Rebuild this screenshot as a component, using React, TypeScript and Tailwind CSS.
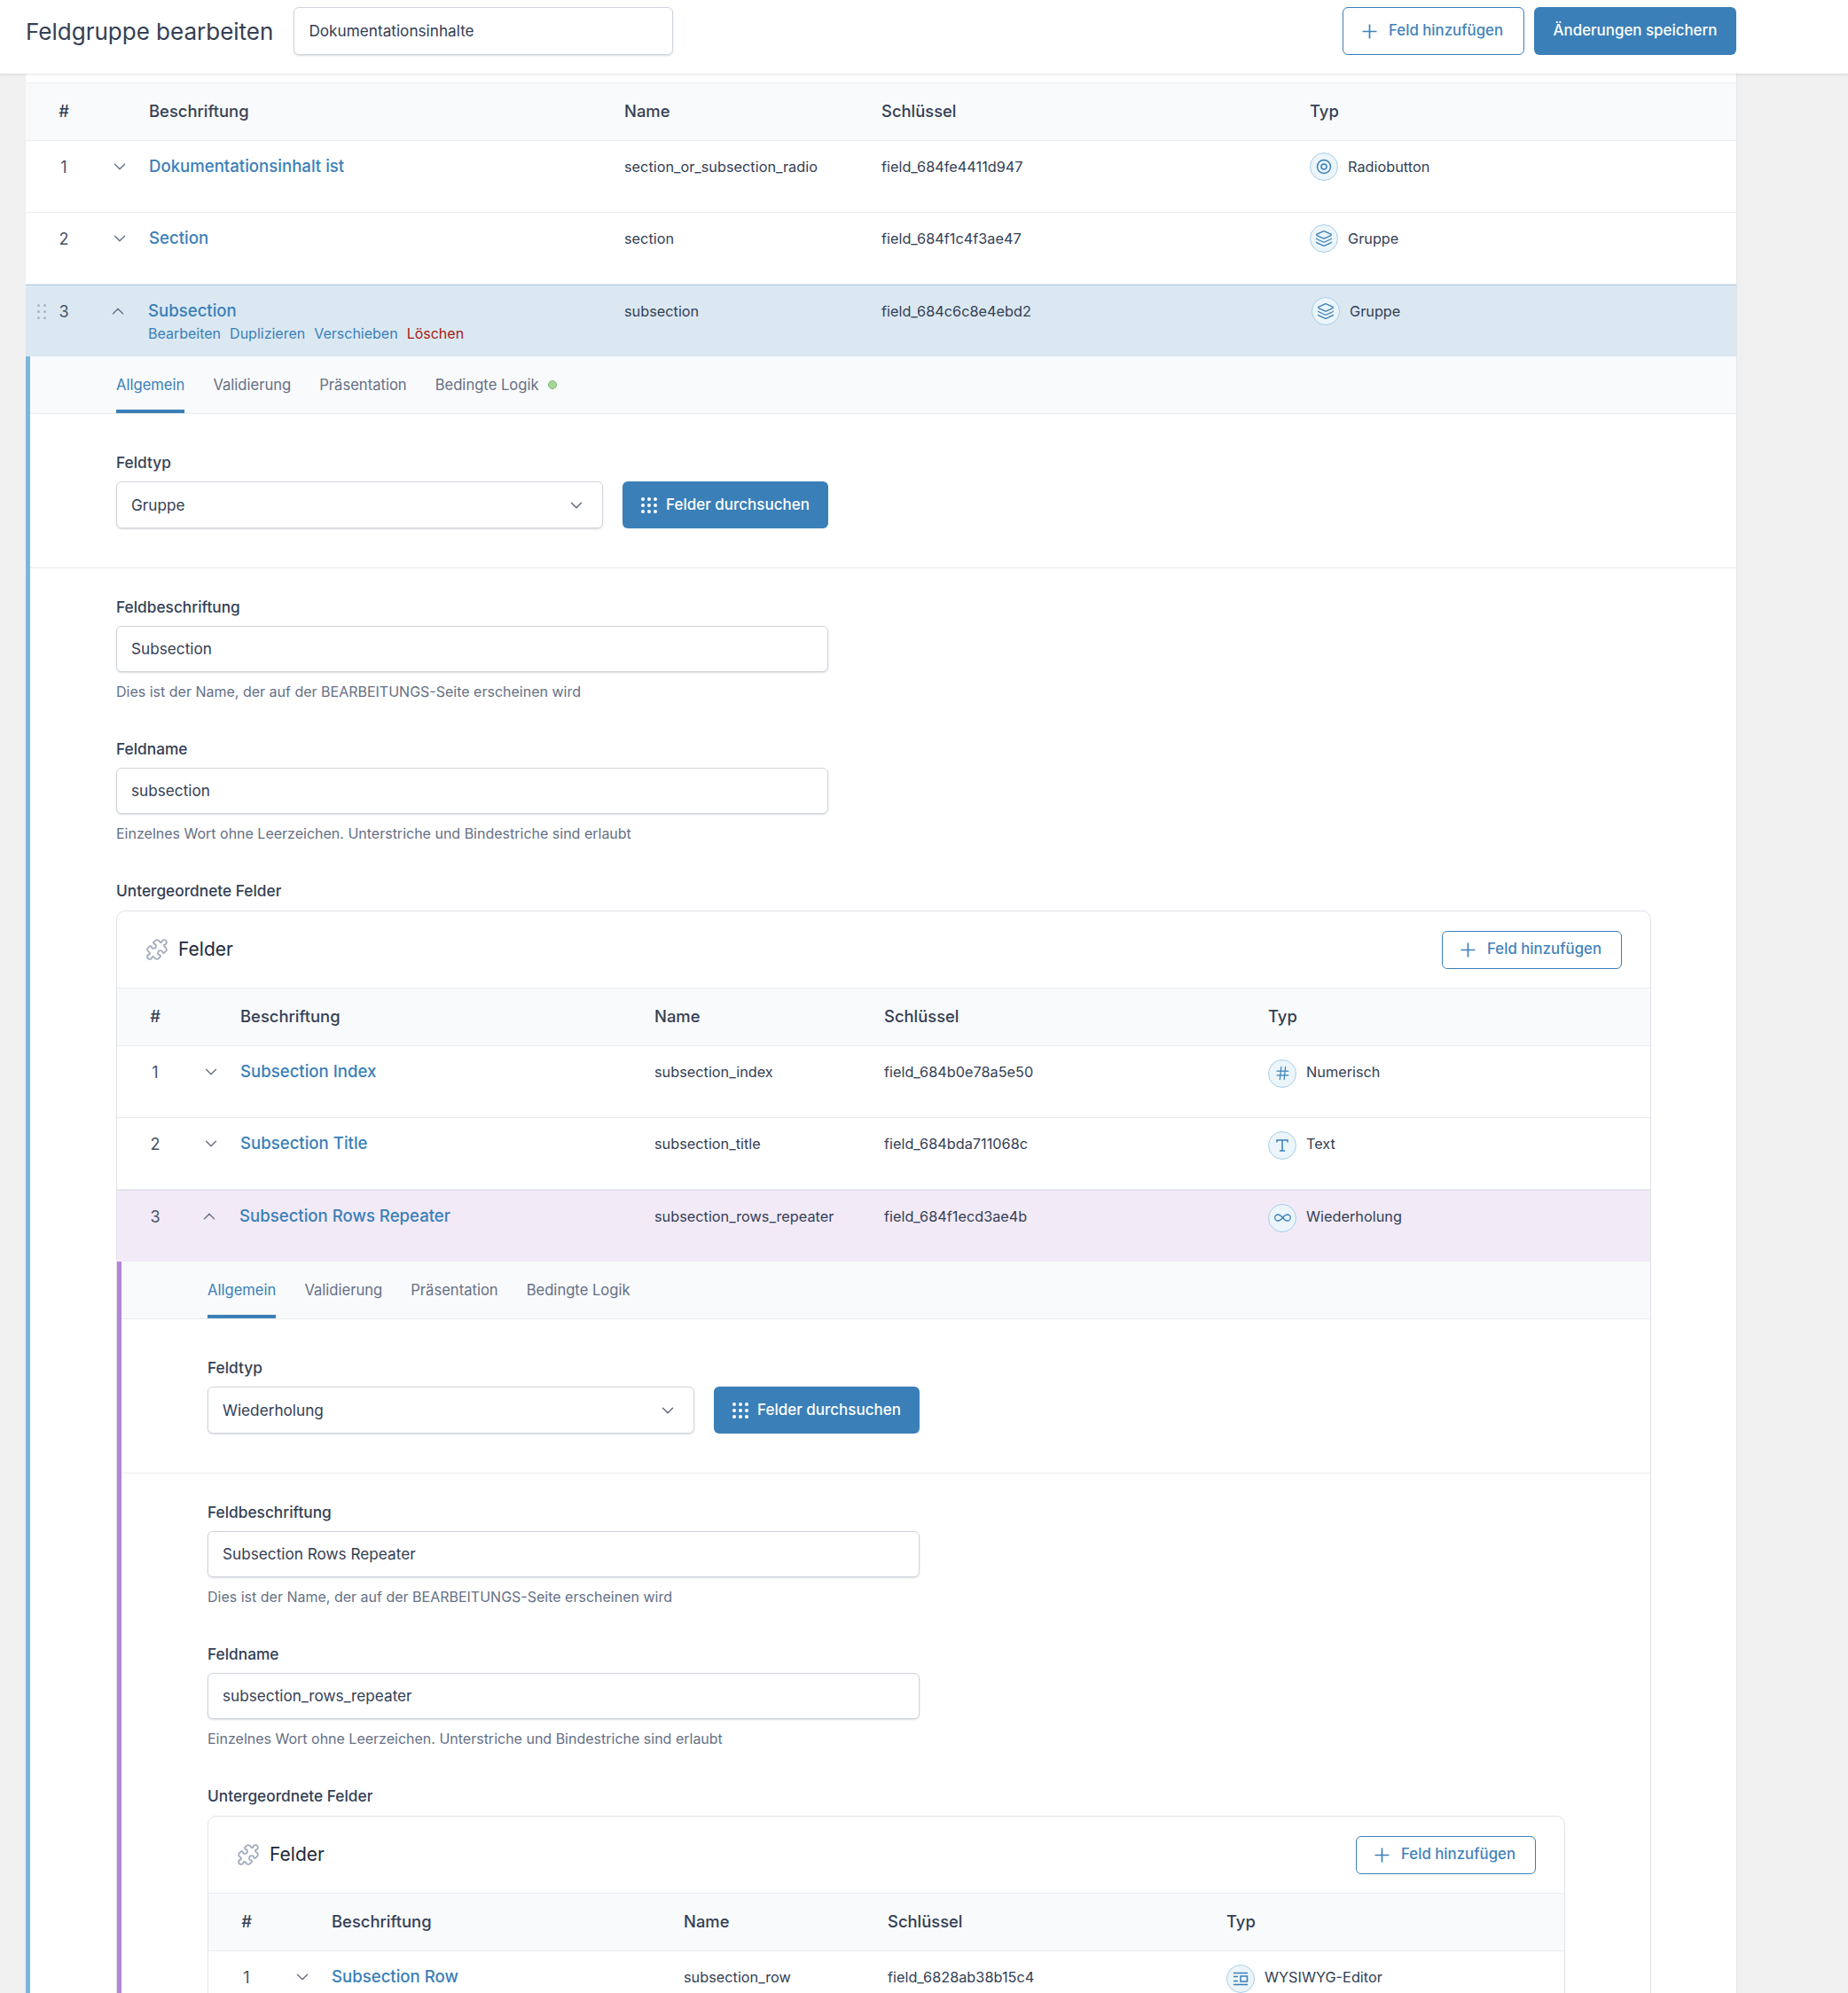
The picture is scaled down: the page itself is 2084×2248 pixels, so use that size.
import React from 'react';
import { ChevronDown, ChevronUp, Hash, Infinity as InfinityIcon, Layers, Puzzle } from 'lucide-react';

type FieldKind = 'radio' | 'group' | 'number' | 'text' | 'repeater' | 'wysiwyg';

interface FieldRowData {
  index: number;
  label: string;
  name: string;
  fieldKey: string;
  kind: FieldKind;
  typeLabel: string;
  open?: boolean;
}

// column widths per nesting depth
const gridByDepth = [
  'grid-cols-[86px_53px_536px_290px_483px_1fr]',
  'grid-cols-[86px_53px_467px_259px_433px_1fr]',
  'grid-cols-[86px_53px_397px_230px_382px_1fr]',
];

const KindGlyph = ({ kind }: { kind: FieldKind }) => {
  switch (kind) {
    case 'radio':
      return (
        <svg width="20" height="20" viewBox="0 0 20 20" fill="none" stroke="currentColor" strokeWidth="1.5">
          <circle cx="10" cy="10" r="7.5" />
          <circle cx="10" cy="10" r="3" />
        </svg>
      );
    case 'group':
      return <Layers size={20} strokeWidth={1.5} />;
    case 'number':
      return <Hash size={19} strokeWidth={1.5} />;
    case 'text':
      return (
        <svg width="18" height="18" viewBox="0 0 18 18" fill="none" stroke="currentColor" strokeWidth="1.5" strokeLinecap="round">
          <path d="M3 5V3h12v2M9 3v12M6.5 15h5" />
        </svg>
      );
    case 'repeater':
      return <InfinityIcon size={21} strokeWidth={1.5} />;
    case 'wysiwyg':
      return (
        <svg width="20" height="20" viewBox="0 0 20 20" fill="none" stroke="currentColor" strokeWidth="1.5">
          <path d="M2 3.5h16M2 16.5h16M2 7.5h5M2 12.5h5" />
          <rect x="10" y="7" width="7.5" height="6" />
        </svg>
      );
  }
};

const FieldTypeIcon = ({ kind, nested }: { kind: FieldKind; nested: boolean }) => (
  <span className={`flex h-8 w-8 shrink-0 items-center justify-center rounded-full border border-[#a9cfe8] bg-[#ebf5fa] text-[#3a7fb8] ${nested ? 'mt-[3px]' : ''}`}>
    <KindGlyph kind={kind} />
  </span>
);

const DotGrid = ({ cols, rows, size, gap, className }: { cols: number; rows: number; size: number; gap: number; className: string }) => {
  const dots = [];
  for (let y = 0; y < rows; y++) {
    for (let x = 0; x < cols; x++) {
      dots.push(<circle key={`${x}-${y}`} cx={size / 2 + x * gap} cy={size / 2 + y * gap} r={size / 2} />);
    }
  }
  return (
    <svg width={size + (cols - 1) * gap} height={size + (rows - 1) * gap} className={className} fill="currentColor">
      {dots}
    </svg>
  );
};

const AddFieldButton = ({ tall }: { tall?: boolean }) => (
  <button
    className={`flex items-center gap-[13px] rounded-[6px] border border-[#3a7fb8] bg-white text-[16.8px] font-medium text-[#3f82ba] ${
      tall ? 'h-[54px] pl-[21px] pr-[23px]' : 'h-[43px] pl-[20px] pr-[22px]'
    }`}
  >
    <svg width="17" height="17" viewBox="0 0 17 17" fill="none" stroke="currentColor" strokeWidth="1.7">
      <path d="M8.500 0.500v16M0.500 8.500h16" />
    </svg>
    Feld hinzufügen
  </button>
);

const HeaderRow = ({ depth }: { depth: number }) => (
  <div className={`grid h-[65px] items-center border-b border-[#eaecf0] bg-[#f9fafb] text-[18.4px] font-medium text-[#344054] ${gridByDepth[depth]}`}>
    <span className="text-center">#</span>
    <span />
    <span>Beschriftung</span>
    <span>Name</span>
    <span>Schlüssel</span>
    <span>Typ</span>
  </div>
);

const FieldRow = ({ field, depth, active }: { field: FieldRowData; depth: number; active?: 'blue' | 'purple' }) => {
  const rowClass =
    active === 'blue'
      ? 'bg-[#dbe8f2] border-t border-t-[#b3d0e5]'
      : active === 'purple'
        ? 'bg-[#f3eaf7] border-t border-t-[#dfdde3]'
        : 'bg-white border-b border-b-[#eaecf0]';

  return (
    <div className={`relative grid h-[81px] items-start pt-[13px] text-[16.3px] text-[#344054] ${rowClass} ${gridByDepth[depth]}`}>
      {active === 'blue' && <DotGrid cols={2} rows={3} size={3} gap={7} className="absolute left-[13px] top-[21px] text-[#a9b6c4]" />}
      <span className="flex h-8 items-center justify-center text-[18px] text-[#475467]">{field.index}</span>
      <span className="flex h-8 items-center pl-[9px] text-[#667085]">
        {field.open ? <ChevronUp size={22} strokeWidth={1.5} className="-ml-[2px]" /> : <ChevronDown size={22} strokeWidth={1.5} />}
      </span>
      <div className={field.open ? '-ml-px' : ''}>
        <div className="flex h-8 items-center text-[18.6px] font-medium text-[#3a7fb8]">{field.label}</div>
        {active === 'blue' && (
          <div className="-mt-px flex gap-[10px] text-[16px] leading-[20px] text-[#3a7fb8]">
            <span>Bearbeiten</span>
            <span>Duplizieren</span>
            <span>Verschieben</span>
            <span className="text-[#a61b0f]">Löschen</span>
          </div>
        )}
      </div>
      <span className="flex h-8 items-center">{field.name}</span>
      <span className="flex h-8 items-center">{field.fieldKey}</span>
      <span className={`flex h-8 items-center gap-[11px] ${active === 'blue' ? 'ml-[2px]' : ''}`}>
        <FieldTypeIcon kind={field.kind} nested={depth > 0} />
        {field.typeLabel}
      </span>
    </div>
  );
};

const TextField = ({ label, value, hint, className }: { label: string; value: string; hint: string; className?: string }) => (
  <div className={className}>
    <div className="mb-[10px] text-[17.3px] font-medium leading-[22px] text-[#344054]">{label}</div>
    <div className="flex h-[52px] w-[803px] items-center rounded-[6px] border border-[#d0d5dd] bg-white px-[16px] text-[17.2px] text-[#344054] shadow-[0_1px_2px_rgba(16,24,40,0.15)]">
      {value}
    </div>
    <div className="mt-[11px] text-[16px] leading-[22px] text-[#667085]">{hint}</div>
  </div>
);

const SettingsPanel = ({
  accent,
  typeName,
  label,
  name,
  showDot,
  children,
}: {
  accent: string;
  typeName: string;
  label: string;
  name: string;
  showDot?: boolean;
  children: React.ReactNode;
}) => (
  <div className={`border-l-[5px] bg-white ${accent}`}>
    <div className="flex h-[65px] gap-[32px] border-b border-[#eaecf0] bg-[#f9fafb] pl-[97px] text-[16.6px] text-[#667085]">
      <span className="flex items-center border-b-[4px] border-[#3a7fb8] pt-[4px] text-[#3a7fb8]">Allgemein</span>
      <span className="flex items-center">Validierung</span>
      <span className="flex items-center">Präsentation</span>
      <span className="flex items-center gap-[10px]">
        Bedingte Logik
        {showDot && <span className="h-[10px] w-[10px] rounded-full border border-[#7dba73] bg-[#a5d79c]" />}
      </span>
    </div>

    <div className="border-b border-[#eaecf0] pb-[44px] pl-[97px] pt-[44px]">
      <div className="mb-[10px] text-[17.3px] font-medium leading-[22px] text-[#344054]">Feldtyp</div>
      <div className="flex gap-[22px]">
        <div className="flex h-[53px] w-[549px] items-center justify-between rounded-[6px] border border-[#d0d5dd] bg-white pl-[16px] pr-[18px] text-[17.2px] text-[#344054] shadow-[0_1px_2px_rgba(16,24,40,0.15)]">
          {typeName}
          <ChevronDown size={22} strokeWidth={1.75} className="text-[#667085]" />
        </div>
        <button className="flex h-[53px] w-[232px] items-center justify-center gap-[10px] rounded-[6px] bg-[#3a7fb8] text-[17px] font-medium text-white">
          <DotGrid cols={3} rows={3} size={4} gap={7} className="text-white" />
          Felder durchsuchen
        </button>
      </div>
    </div>

    <div className="pl-[97px] pr-[96px] pt-[33px]">
      <TextField label="Feldbeschriftung" value={label} hint="Dies ist der Name, der auf der BEARBEITUNGS-Seite erscheinen wird" />
      <TextField className="mt-[43px]" label="Feldname" value={name} hint="Einzelnes Wort ohne Leerzeichen. Unterstriche und Bindestriche sind erlaubt" />
      <div className="mb-[11px] mt-[43px] text-[17.3px] font-medium leading-[22px] text-[#344054]">Untergeordnete Felder</div>
      {children}
    </div>
  </div>
);

const FieldsCard = ({ children }: { children: React.ReactNode }) => (
  <div className="overflow-hidden rounded-[10px] border border-[#dfe2e8] bg-white">
    <div className="flex h-[87px] items-center justify-between border-b border-[#eaecf0] pl-[32px] pr-[32px]">
      <div className="flex items-center gap-[11px] text-[21px] text-[#1d2939]">
        <Puzzle size={26} strokeWidth={1.75} className="text-[#a5afc0]" />
        Felder
      </div>
      <AddFieldButton />
    </div>
    {children}
  </div>
);

const App = () => {
  return (
    <div className="h-[2248px] overflow-hidden bg-[#f0f0f1] font-[Inter,sans-serif]">
      <header className="relative z-10 flex h-[83px] items-start justify-between bg-white pl-[29px] pr-[126px] pt-[8px] shadow-[0_1px_3px_rgba(16,24,40,0.12)]">
        <div className="flex items-center gap-[23px]">
          <h1 className="text-[26px] text-[#344054]">Feldgruppe bearbeiten</h1>
          <div className="flex h-[54px] w-[428px] items-center rounded-[6px] border border-[#d0d5dd] bg-white px-[16px] text-[17.2px] text-[#344054] shadow-[0_1px_2px_rgba(16,24,40,0.15)]">
            Dokumentationsinhalte
          </div>
        </div>
        <div className="flex gap-[11px]">
          <AddFieldButton tall />
          <button className="h-[54px] w-[228px] rounded-[6px] bg-[#3a7fb8] text-[16.9px] font-medium text-white">Änderungen speichern</button>
        </div>
      </header>

      <main className="ml-[29px] w-[1930px] border-r border-[#e3e5e8] bg-white pt-[10px]">
        <div className="border-t border-[#eaecf0]">
          <HeaderRow depth={0} />
          <FieldRow depth={0} field={{ index: 1, label: 'Dokumentationsinhalt ist', name: 'section_or_subsection_radio', fieldKey: 'field_684fe4411d947', kind: 'radio', typeLabel: 'Radiobutton' }} />
          <FieldRow depth={0} field={{ index: 2, label: 'Section', name: 'section', fieldKey: 'field_684f1c4f3ae47', kind: 'group', typeLabel: 'Gruppe' }} />
          <FieldRow depth={0} active="blue" field={{ index: 3, label: 'Subsection', name: 'subsection', fieldKey: 'field_684c6c8e4ebd2', kind: 'group', typeLabel: 'Gruppe', open: true }} />

          <SettingsPanel accent="border-[#7db6dc]" typeName="Gruppe" label="Subsection" name="subsection" showDot>
            <FieldsCard>
              <HeaderRow depth={1} />
              <FieldRow depth={1} field={{ index: 1, label: 'Subsection Index', name: 'subsection_index', fieldKey: 'field_684b0e78a5e50', kind: 'number', typeLabel: 'Numerisch' }} />
              <FieldRow depth={1} field={{ index: 2, label: 'Subsection Title', name: 'subsection_title', fieldKey: 'field_684bda711068c', kind: 'text', typeLabel: 'Text' }} />
              <FieldRow depth={1} active="purple" field={{ index: 3, label: 'Subsection Rows Repeater', name: 'subsection_rows_repeater', fieldKey: 'field_684f1ecd3ae4b', kind: 'repeater', typeLabel: 'Wiederholung', open: true }} />

              <SettingsPanel accent="border-[#b584d6]" typeName="Wiederholung" label="Subsection Rows Repeater" name="subsection_rows_repeater">
                <FieldsCard>
                  <HeaderRow depth={2} />
                  <FieldRow depth={2} field={{ index: 1, label: 'Subsection Row', name: 'subsection_row', fieldKey: 'field_6828ab38b15c4', kind: 'wysiwyg', typeLabel: 'WYSIWYG-Editor' }} />
                </FieldsCard>
              </SettingsPanel>
            </FieldsCard>
          </SettingsPanel>
        </div>
      </main>
    </div>
  );
};

export default App;
